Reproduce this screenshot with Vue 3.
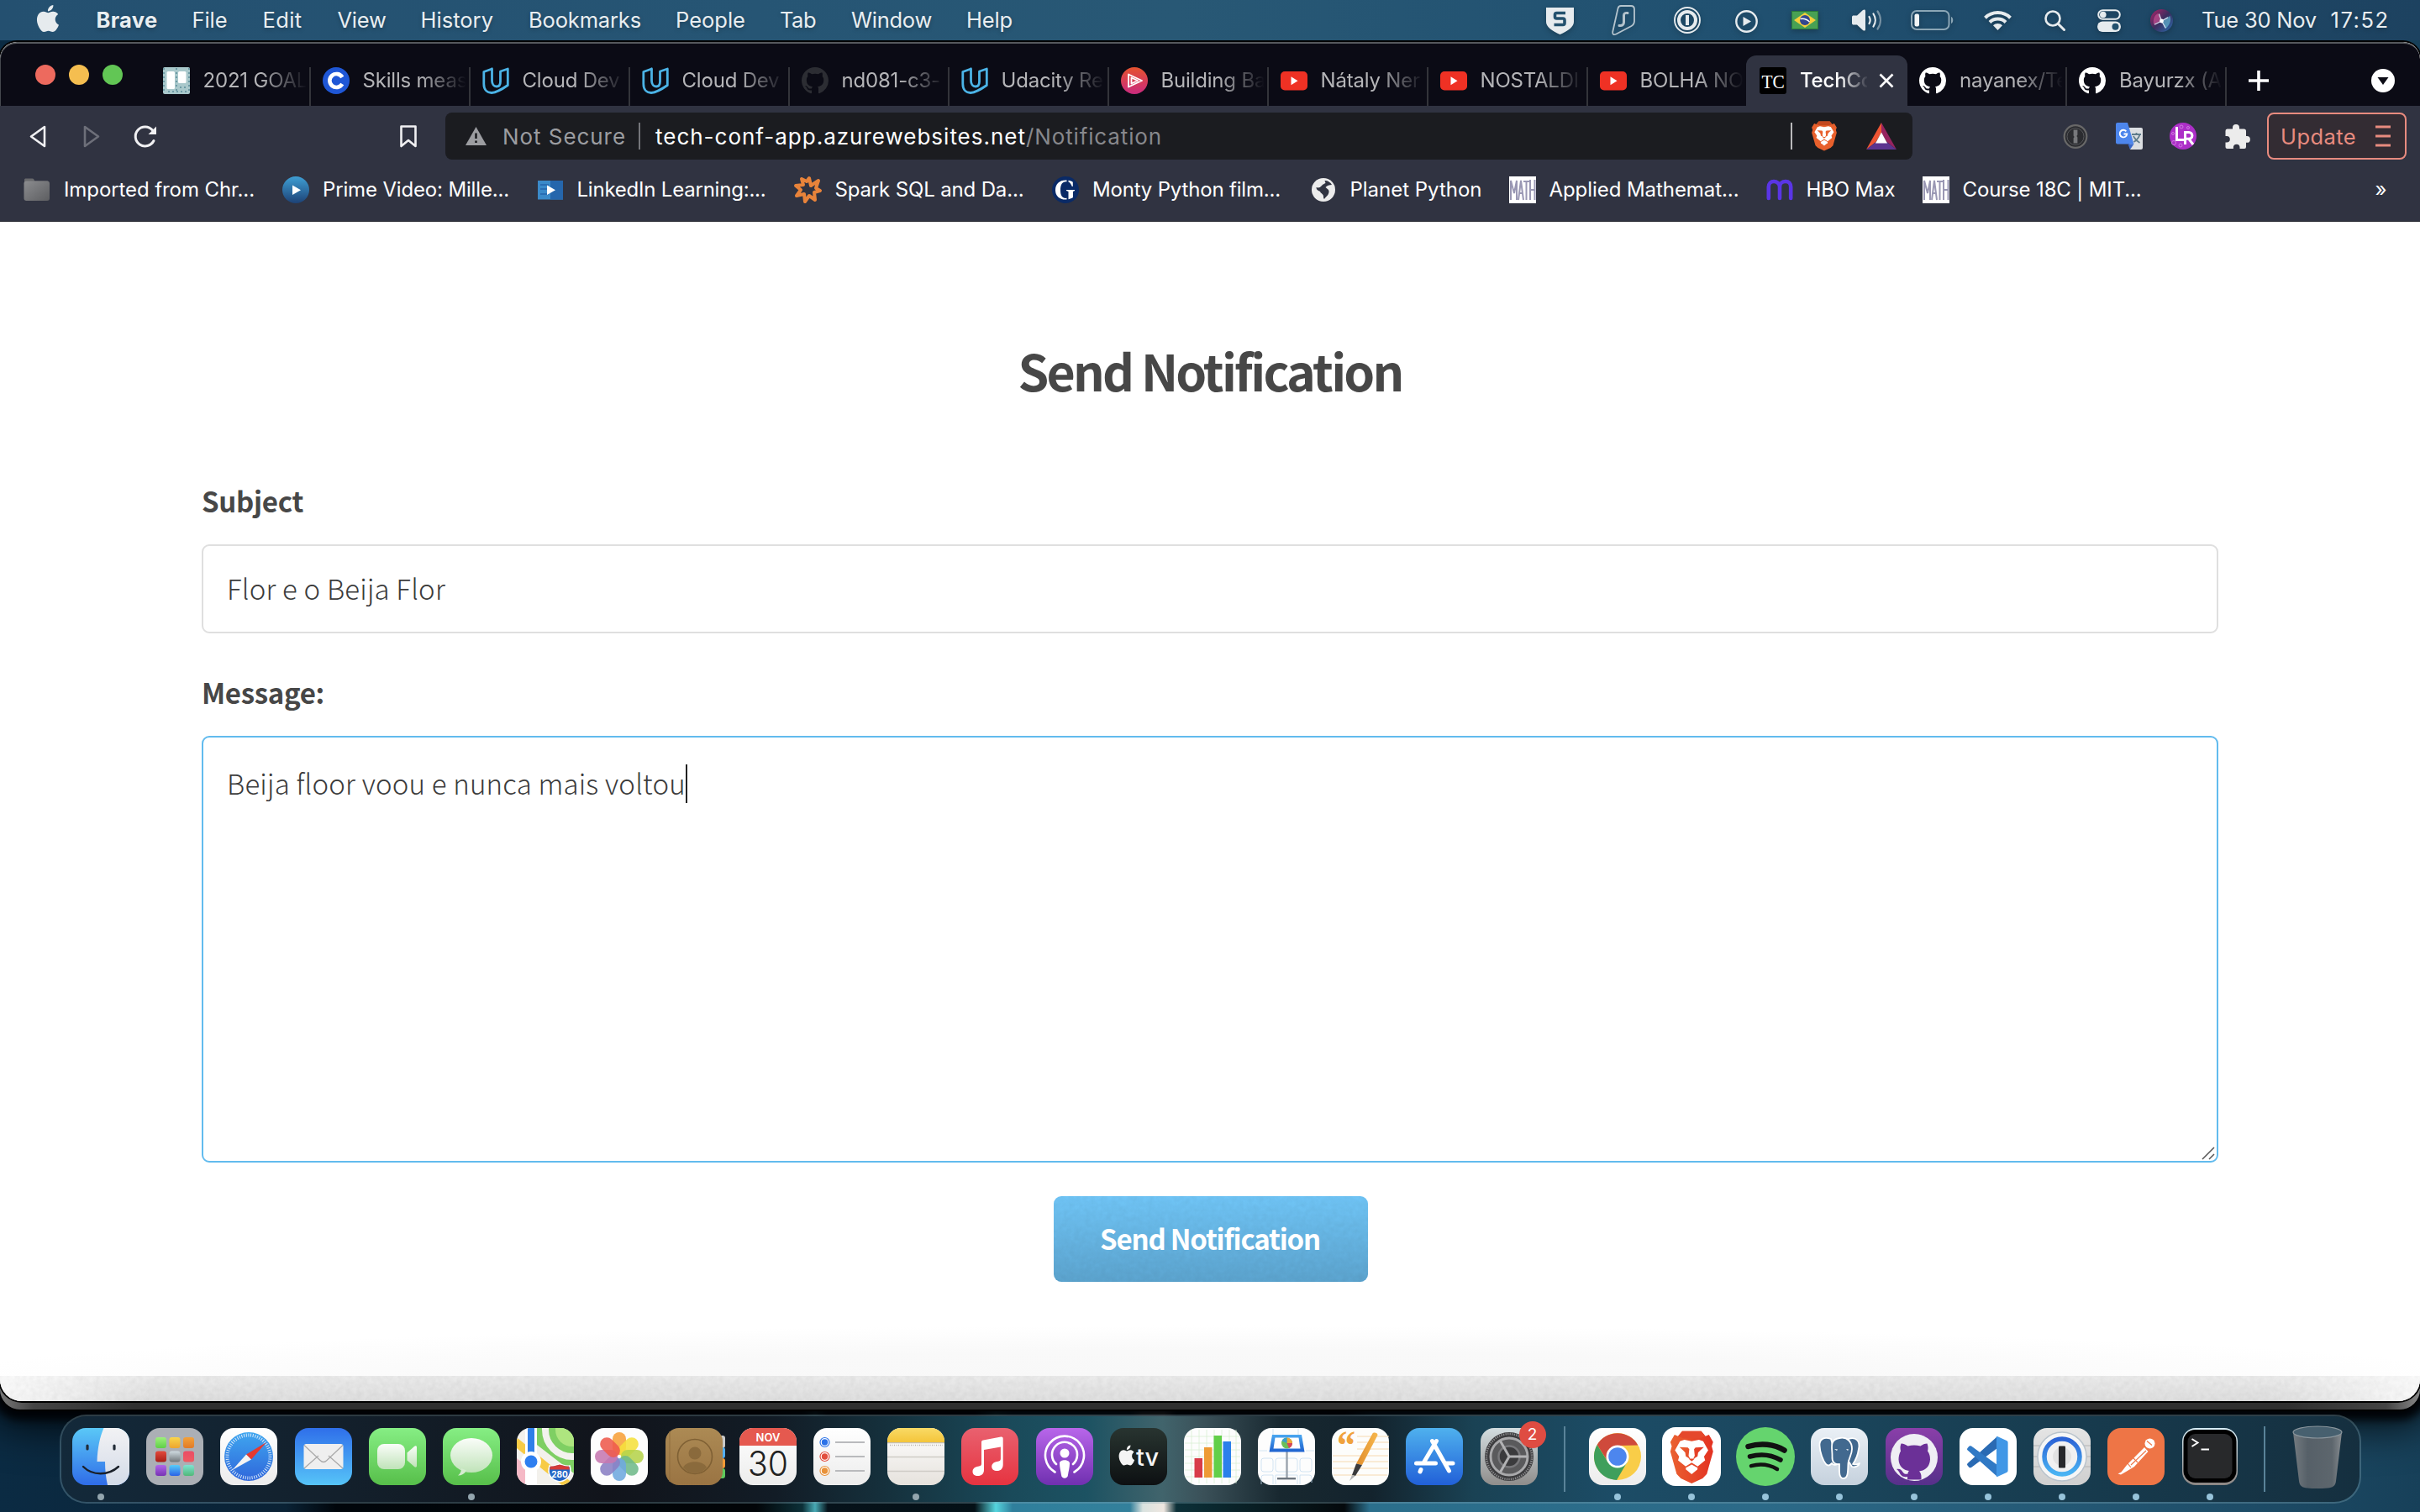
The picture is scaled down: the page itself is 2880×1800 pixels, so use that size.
<script setup>
// Stretches or tightens letter spacing so a label fills the given width.
const vFit = {
  mounted(el, { value }) {
    if (!value) return
    const natural = el.getBoundingClientRect().width
    el.style.letterSpacing = `${(value - natural) / el.textContent.length}px`
  },
}

const sans = `font-family="Inter, 'Liberation Sans', sans-serif"`

const octocat =
  'M8 0C3.58 0 0 3.58 0 8c0 3.54 2.29 6.53 5.47 7.59.4.07.55-.17.55-.38 0-.19-.01-.82-.01-1.49-2.01.37-2.53-.49-2.69-.94-.09-.23-.48-.94-.82-1.13-.28-.15-.68-.52-.01-.53.63-.01 1.08.58 1.23.82.72 1.21 1.87.87 2.33.66.07-.52.28-.87.51-1.07-1.78-.2-3.64-.89-3.64-3.95 0-.87.31-1.59.82-2.15-.08-.2-.36-1.02.08-2.12 0 0 .67-.21 2.2.82.64-.18 1.32-.27 2-.27.68 0 1.36.09 2 .27 1.53-1.04 2.2-.82 2.2-.82.44 1.1.16 1.92.08 2.12.51.56.82 1.27.82 2.15 0 3.07-1.87 3.75-3.65 3.95.29.25.54.73.54 1.48 0 1.07-.01 1.93-.01 2.2 0 .21.15.46.55.38A8.013 8.013 0 0016 8c0-4.42-3.58-8-8-8z'
const apple =
  'M12.152 6.896c-.948 0-2.415-1.078-3.96-1.04-2.04.027-3.91 1.183-4.961 3.014-2.117 3.675-.546 9.103 1.519 12.09 1.013 1.454 2.208 3.09 3.792 3.039 1.52-.065 2.09-.987 3.935-.987 1.831 0 2.35.987 3.96.948 1.637-.026 2.676-1.48 3.676-2.948 1.156-1.688 1.636-3.325 1.662-3.415-.039-.013-3.182-1.221-3.22-4.857-.026-3.04 2.48-4.494 2.597-4.559-1.429-2.09-3.623-2.324-4.39-2.376-2-.156-3.675 1.09-4.61 1.09zM15.53 3.83c.843-1.012 1.4-2.427 1.245-3.83-1.207.052-2.662.805-3.532 1.818-.78.896-1.454 2.338-1.273 3.714 1.338.104 2.715-.688 3.559-1.701'

const lion = (fill, crown) => `
  <path fill="${fill}" d="M9 .5h13.500l3 3.500 2.500-1 3 5-1 3 1 3.500-4.500 15.500-3 3L15.700 36.500 8 33l-3-3L.5 14.500l1-3.500-1-3 3-5L6 4z"/>
  <path fill="${crown}" d="M9 .5h13.500l3 3.500-4 1.500H10L6 4z"/>
  <path fill="#fff" d="M10.500 6.500l5.200 1 5.200-1 3 1 3.600 6.200-3 4.300.8 2.600-5.300 4.200-4.300-2.600-4.300 2.600L6 20.600l.8-2.600-3-4.300 3.600-6.200z"/>
  <path fill="#fff" d="M15.700 23.500l4.300 2.300-.3 1.200-4 3.200-4-3.200-.3-1.200z"/>
  <path fill="${fill}" d="M7 11.500l6 .3 1 1.200-.5 4.500 1.200 2.200-3.200-1.800-.4-2.600-1.600-1.600zM24.400 11.500l-6 .3-1 1.200.5 4.500-1.200 2.200 3.200-1.800.4-2.600 1.600-1.600zM13.500 19.500h4.400l-2.200 1.800z"/>`

const udacity = `<path fill="none" stroke="#4bb3e6" stroke-width="2.800" stroke-linejoin="round" stroke-linecap="round" d="M11.500 2L1.800 5.500V20C1.800 27 6 30.500 11 30.500c5.500 0 11-3.500 19.300-9V2L21.500 5v12c0 4-1.500 6-4.500 6s-5.500-2.500-5.500-7V2"/>`
const youtube = `<rect y="5" width="32" height="22.500" rx="5" fill="#ef3124"/><path fill="#fff" d="M12.500 11.200l8 5-8 5z"/>`
const math = `<rect width="32" height="32" fill="#fff"/><path fill="none" stroke="#9a98b4" stroke-width="2" d="M2 28V5l4 15 3-15v23M11 28l3-23 3 23M12 20h4M17 6h7M20.500 6v22M25 4v24M30.500 4v24M25 16h5"/>`

const favicons = {
  trello: `<rect width="32" height="32" rx="2" fill="#a9c8cb"/><path stroke="#6d9ba5" stroke-width="2" stroke-dasharray="2 3" d="M1 1v30M16 1v30M31 1v30M6 29h24M20 24h10"/><rect x="4.500" y="5" width="9.500" height="21" rx="1.500" fill="#fff"/><rect x="18" y="5" width="9.500" height="14" rx="1.500" fill="#fff"/>`,
  coursera: `<circle cx="16" cy="16" r="16" fill="#1f57d6"/><path fill="none" stroke="#fff" stroke-width="4.600" d="M23.300 12A8 8 0 1 0 23.300 20"/>`,
  udacity,
  githubDim: `<path transform="scale(2)" fill="#2c2d33" d="${octocat}"/>`,
  github: `<path transform="scale(2)" fill="#fff" d="${octocat}"/>`,
  acloud: `<circle cx="16" cy="16" r="16" fill="url(#g-acloud)"/><path fill="none" stroke="#fff" stroke-width="1.800" stroke-linejoin="round" d="M9 8.500l16 7.500-16 7.500zM12.500 12.500l7.500 3.500-7.500 3.500z"/>`,
  youtube,
  tc: `<rect width="32" height="32" rx="3" fill="#000"/><text x="16" y="24.500" fill="#fff" font-size="23" text-anchor="middle" textLength="27" lengthAdjust="spacingAndGlyphs" font-family="'Liberation Serif', serif">TC</text>`,
}

const bookmarkIcons = {
  folder: `<path fill="#68696c" d="M1 4c0-1 .8-1.500 1.500-1.500h8C12 2.500 13 4 13 5.500h16V10H1z"/><rect y="5.500" x=".5" width="30.500" height="23.500" rx="3" fill="url(#g-folder)"/>`,
  prime: `<circle cx="16" cy="16" r="16" fill="url(#g-prime)"/><path fill="#fff" d="M12 10.500l10 5.800-10 5.800z"/>`,
  linkedin: `<rect x="1" y="5" width="30" height="22.500" fill="#3a8ac9"/><path fill="#2566ac" d="M16 5h15v22.500H16z"/><path stroke="#2566ac" stroke-width="1.500" d="M4 10h10M4 15h8M4 21h10"/><path fill="#fff" d="M12 10.500l10 5.800-10 5.800z"/>`,
  spark: `<path fill="none" stroke="#e8833a" stroke-width="4" stroke-linejoin="round" d="M17 2l2 9 9-6-3 9 5 3-7 2 1 9-7-5-5 7-1-9-9 2 5-7-6-5 9-1-2-7 6 3z"/>`,
  guardian: `<circle cx="16" cy="16" r="16" fill="#0a2a66"/><path fill="#fff" d="M17.500 4.500C9 4 4 9 4 16.200S9 28 17.500 27.500v-1.700C12.500 26.500 10 23 10 16.200S12.500 5.800 17.500 6.300zM19.500 4.800c2 .3 4 1 5.300 1.900V12h-1c-1-2.500-2.400-4.700-4.300-5.500zM17 16h10v1l-2 1v7c-1.500 1-3.500 1.800-5.500 2.200V18L17 17z"/>`,
  globe: `<circle cx="16" cy="16" r="14" fill="#ececec"/><path fill="#303341" d="M7.500 13c2 1 4.500.5 6.500-2 1.500-2 3-2 4.500-3l-1-3c4 0 7 2 8.500 5-3 0-6 1-7.500 3l3 2.500c2 2 1 6-2 8.500-1 1-2 2-2.500 3-1.500-1-.5-3.500-1.500-5-1-1.800-3-2-3.500-4-2-1-4.500-2-4.500-5z"/>`,
  math,
  hbo: `<path fill="none" stroke="#5a35e6" stroke-width="4.600" stroke-linecap="round" d="M2.800 26V12.500C2.800 8.500 5.500 6 9 6s7 2.500 7 6.500V26M16 12.500C16 8.500 19 6 23 6s6.200 2.500 6.200 6.500V26"/>`,
}

const extensionIcons = {
  onepass: `<circle cx="16" cy="16.500" r="13.300" fill="#2b2c30" stroke="#686868" stroke-width="2.200"/><circle cx="16" cy="16.500" r="10" fill="none" stroke="#55565a" stroke-width="1"/><path fill="#77787b" d="M13.600 8.500h4.800v6l-1 1.500 1 1.500v7h-4.800v-6l1-1.500-1-1.500z"/>`,
  translate: `<path fill="#dcdfe2" d="M14 6h16a2 2 0 0 1 2 2v22a2 2 0 0 1-2 2H17z"/><path fill="none" stroke="#607d8b" stroke-width="1.800" d="M19 14h11M24.500 12v2M28.500 14c-1 4-4 7-7 9M21 16c1.500 3.500 4 6 7.500 8"/><path fill="#4d86ec" d="M2 0h12l7.500 25.500H2a2 2 0 0 1-2-2V2a2 2 0 0 1 2-2z"/><path fill="#3a69c9" d="M14.500 25.500h7L17 32z"/><path fill="none" stroke="#fff" stroke-width="1.900" d="M12.300 10.300a4.300 4.300 0 1 0 1 3.200H9.500"/>`,
  lr: `<circle cx="16" cy="16" r="16" fill="#ad2fc8"/><g fill="none" stroke="#cf7be0" stroke-width="1"><circle cx="14" cy="5" r="2"/><circle cx="22" cy="6" r="1.500"/><circle cx="5" cy="24" r="2.500"/><circle cx="13" cy="27" r="2"/><circle cx="4" cy="13" r="1.500"/></g><path fill="none" stroke="#fff" stroke-width="3" d="M8.500 5v15.500H18M18.500 26V11.500h4.500a3.800 3.800 0 0 1 0 7.800h-4M23 19.500l5 6.500"/>`,
  puzzle: `<path fill="#ececec" d="M4.500 7.500H11V6a4 4 0 0 1 8 0v1.500h5.500A2.500 2.500 0 0 1 27 10v6h1a3.900 3.900 0 0 1 0 7.800h-1V29a2 2 0 0 1-2 2h-5.500v-1.500a3.800 3.800 0 0 0-7.600 0V31H4.500a2 2 0 0 1-2-2v-5.500H4a3.800 3.800 0 0 0 0-7.600H2.500v-6a2.300 2.300 0 0 1 2-2.400z"/>`,
}

const menus = [
  { label: 'Brave', slot: 114, width: 73, bold: true },
  { label: 'File', slot: 84, width: 42 },
  { label: 'Edit', slot: 89, width: 47 },
  { label: 'View', slot: 99, width: 58 },
  { label: 'History', slot: 128.500, width: 86.500 },
  { label: 'Bookmarks', slot: 175, width: 134 },
  { label: 'People', slot: 124, width: 83 },
  { label: 'Tab', slot: 85, width: 43 },
  { label: 'Window', slot: 137, width: 96 },
  { label: 'Help', slot: 60, width: 55 },
]

const statusIcons = [
  { slot: 78, w: 33, h: 33, body: `<path fill="#e6ebee" d="M0 1h33v17c0 6-7 11-16.500 15C7 29 0 24 0 18z"/><path fill="none" stroke="#23516e" stroke-width="3.600" stroke-linejoin="round" d="M23 7.500H12.500a2 2 0 0 0-2 2V12a2 2 0 0 0 2 2H20a2 2 0 0 1 2 2v3.500a2 2 0 0 1-2 2H9.500"/>` },
  { slot: 74, w: 28, h: 36, body: `<g opacity=".75" fill="none" stroke="#e6ebee"><path stroke-width="1.800" d="M7.500 4C8 1.800 9 1 11 1h12c2.500 0 4 1.500 4 4v14c0 3-1 4.500-3.500 6L5.500 34.500c-3 1.500-4.700.5-4.300-2.500z"/><path stroke-width="3" stroke-linecap="round" d="M19 9.500c-3-.5-4.500.5-4.500 3v8c0 3-2 4.500-5.500 4"/></g>` },
  { slot: 73, w: 32, h: 32, body: `<circle cx="16" cy="16" r="15" fill="none" stroke="#e6ebee" stroke-width="1.900"/><circle cx="16" cy="16" r="10" fill="none" stroke="#e6ebee" stroke-width="4"/><path fill="#e6ebee" d="M14 10h4v12h-4z"/>` },
  { slot: 67, w: 27, h: 27, body: `<circle cx="13.500" cy="14.500" r="12.200" fill="none" stroke="#e6ebee" stroke-width="2.400"/><path fill="#e6ebee" d="M9.500 9l9.500 5.500L9.500 20z"/>` },
  { slot: 72, w: 32, h: 22, body: `<path fill="#2a7a3a" d="M0 0h32v22H0z"/><path fill="#48a154" d="M1 1h30v20H1z"/><path fill="#f6cf3c" d="M16 2l13 9-13 9L3 11z"/><circle cx="16" cy="11" r="6" fill="#33478f"/><path fill="none" stroke="#fff" stroke-width="1.400" d="M10.500 9.500c4-.8 8 .5 11 3.500"/>` },
  { slot: 70, w: 36, h: 26, body: `<path fill="#e6ebee" d="M0 9.500C0 8 .8 7.500 2 7.500h4L13 1c1.500-1 3-.8 3 1v22c0 1.800-1.500 2-3 1l-7-6.500H2c-1.200 0-2-.5-2-2z"/><g fill="none" stroke="#e6ebee" stroke-width="2.200" stroke-linecap="round"><path d="M20.500 9c1.500 2.500 1.500 5.500 0 8"/><path d="M25.500 5.500c3 4.500 3 10.500 0 15"/><path opacity=".45" d="M30.500 2.500c4.500 6.500 4.500 14.500 0 21"/></g>` },
  { slot: 87, w: 51, h: 24, body: `<rect x="1" y="1" width="44.500" height="22" rx="6" fill="none" stroke="#8ba6b6" stroke-width="2"/><rect x="4.500" y="4.500" width="5.500" height="15" rx="2" fill="#f1f4f5"/><path fill="#8ba6b6" d="M48 8c3 1 3 7 0 8z"/>` },
  { slot: 72, w: 33, h: 24, body: `<g fill="none" stroke="#e6ebee" stroke-width="4"><path d="M1.500 9.200a21.500 21.500 0 0 1 30 0"/><path d="M7 14.500a13.500 13.500 0 0 1 19 0"/></g><path fill="#e6ebee" d="M11 18.200c3.300-2.900 7.700-2.900 11 0L16.500 24z"/>` },
  { slot: 63, w: 25, h: 25, body: `<circle cx="10" cy="10" r="8.500" fill="none" stroke="#e6ebee" stroke-width="2.600"/><path stroke="#e6ebee" stroke-width="3" stroke-linecap="round" d="M16.500 16.500l7 7"/>` },
  { slot: 63, w: 28, h: 27, body: `<rect x="1.200" y="1.200" width="25.600" height="10.500" rx="5.200" fill="none" stroke="#e6ebee" stroke-width="2"/><circle cx="6.800" cy="6.500" r="3.800" fill="#e6ebee"/><rect y="14.500" width="28" height="12.500" rx="6.200" fill="#e6ebee"/><circle cx="21.500" cy="20.700" r="4" fill="#23516e"/>` },
  { slot: 61, w: 27, h: 27, body: `<circle cx="13.500" cy="13.500" r="13.500" fill="url(#g-siri)"/><path fill="#6fd3e8" opacity=".55" d="M13.500 14l10-6c2 6-1 11-5 15z"/><path fill="#e05aa0" opacity=".55" d="M13.500 14L4 18C3 12 5 7 9 5z"/><path fill="none" stroke="#e9f4ff" stroke-width="1.300" stroke-linecap="round" opacity=".9" d="M13.500 14l-3-8M13.500 14l7-4M13.500 14l-8 4M13.500 14l4.500 8"/><circle cx="13.500" cy="14" r="2.400" fill="#fff"/>` },
]

const tabs = [
  { icon: 'trello', title: '2021 GOAL' },
  { icon: 'coursera', title: 'Skills meas' },
  { icon: 'udacity', title: 'Cloud Dev' },
  { icon: 'udacity', title: 'Cloud Dev' },
  { icon: 'githubDim', title: 'nd081-c3-' },
  { icon: 'udacity', title: 'Udacity Re' },
  { icon: 'acloud', title: 'Building Ba' },
  { icon: 'youtube', title: 'Nátaly Ner' },
  { icon: 'youtube', title: 'NOSTALDI' },
  { icon: 'youtube', title: 'BOLHA NO' },
  { icon: 'tc', title: 'TechCo', active: true },
  { icon: 'github', title: 'nayanex/Te' },
  { icon: 'github', title: 'Bayurzx (A' },
]

const bookmarks = [
  { icon: 'folder', label: 'Imported from Chr...', slot: 308, width: 227 },
  { icon: 'prime', label: 'Prime Video: Mille...', slot: 302.500, width: 222 },
  { icon: 'linkedin', label: 'LinkedIn Learning:...', slot: 307, width: 225 },
  { icon: 'spark', label: 'Spark SQL and Da...', slot: 306.500, width: 225 },
  { icon: 'guardian', label: 'Monty Python film...', slot: 306.500, width: 224 },
  { icon: 'globe', label: 'Planet Python', slot: 237, width: 157 },
  { icon: 'math', label: 'Applied Mathemat...', slot: 306, width: 226 },
  { icon: 'hbo', label: 'HBO Max', slot: 186, width: 106 },
  { icon: 'math', label: 'Course 18C | MIT...', slot: 262, width: 213 },
]

const tile = (fill) => `<rect width="68" height="68" rx="16" fill="${fill}"/>`
const petals = ['#f7a13a', '#f5e03c', '#b5d34b', '#6fb98a', '#6ea8de', '#8a80c4', '#c678b0', '#ee5a4c']
  .map((c, i) => `<rect x="26" y="5" width="16" height="27" rx="8" fill="${c}" opacity=".88" transform="rotate(${i * 45} 34 34)"/>`)
  .join('')
const pads = ['g-lp1', 'g-lp2', 'g-lp3', 'g-lp4', 'g-lp5', 'g-lp6', 'g-lp7', 'g-lp8', 'g-lp9']
  .map((g, i) => `<rect x="${11 + (i % 3) * 16.500}" y="${11 + Math.floor(i / 3) * 16.500}" width="13" height="13" rx="3" fill="url(#${g})"/>`)
  .join('')

const apps = [
  { name: 'finder', running: true, body: `${tile('url(#g-finderL)')}<path fill="url(#g-finderR)" d="M37.500 0H52a16 16 0 0 1 16 16v36a16 16 0 0 1-16 16H42c-2-9-3-18-3-28h-9.500C30 24 33 10 37.500 0z"/><path stroke="#222c38" stroke-width="3.200" stroke-linecap="round" d="M18 21v4M50 21v4"/><path fill="none" stroke="#1a2029" stroke-width="2.400" stroke-linecap="round" d="M13 46c11 11 30 11 42 0"/>` },
  { name: 'launchpad', body: tile('#abafb5') + pads },
  { name: 'safari', body: `${tile('url(#g-white)')}<circle cx="34" cy="34" r="29" fill="url(#g-safari)"/><circle cx="34" cy="34" r="25.500" fill="none" stroke="#d6e8fa" stroke-width="4" stroke-dasharray="1 1.700"/><path fill="#e5392f" d="M55 17L31 31.500l6 6z"/><path fill="#f4f4f4" d="M14.500 50L31 31.500l6 6z"/>` },
  { name: 'mail', body: `${tile('url(#g-mail)')}<rect x="10.500" y="19" width="47" height="30" rx="3" fill="#efefef"/><path fill="none" stroke="#a9a9a9" stroke-width="1.200" d="M11 48l17-15M57 48L40 33M11 20.500l19 18c2.500 2.500 5.500 2.500 8 0l19-18"/>` },
  { name: 'facetime', body: `${tile('url(#g-green)')}<rect x="10" y="19" width="33" height="30" rx="8" fill="url(#g-glass)"/><path fill="url(#g-glass)" d="M45.500 29.500L54 22c1.500-1.200 3-.6 3 1v22c0 1.600-1.500 2.200-3 1l-8.500-7.500z"/>` },
  { name: 'messages', running: true, body: `${tile('url(#g-green)')}<ellipse cx="34" cy="32.500" rx="25" ry="20.500" fill="url(#g-glass)"/><path fill="#d5ecd0" d="M22 48c0 4-1.500 6.500-4 8.500 4.500 0 8-2 10-6z"/>` },
  { name: 'maps', body: `<g clip-path="url(#c-tile)"><path fill="#f3f1ec" d="M0 0h68v68H0z"/><path fill="#7fcf63" d="M24 0h44v54L24 20z"/><circle cx="66" cy="2" r="32" fill="none" stroke="#f3f2ee" stroke-width="8"/><circle cx="66" cy="2" r="20" fill="#aee57f"/><path stroke="#f7cb45" stroke-width="10" d="M-2 16l66 54"/><path fill="#f5b9c6" d="M0 36l10 8v24H0z"/><path stroke="#fff" stroke-width="14" d="M17 0v68"/><path stroke="#2f7fe8" stroke-width="8" d="M17 0v36"/><circle cx="17" cy="40" r="12" fill="#fff"/><circle cx="17" cy="40" r="7.500" fill="#2e7ff0"/></g><path fill="#2566c4" stroke="#fff" stroke-width="1.500" d="M39 45c4 1 8-1 12-2 4 1 8 3 12 2 3 9-1 17-12 19-11-2-15-10-12-19z"/><path fill="#d43b38" d="M40 45.500c4 .5 7-1 11-2 4 1 7 2.500 11 2l1 4H39z"/><text x="51" y="59" fill="#fff" font-size="10" font-weight="700" text-anchor="middle" ${sans}>280</text>` },
  { name: 'photos', body: tile('#fdfdfd') + petals },
  { name: 'contacts', body: `<rect x="60" y="9" width="11" height="15" rx="3" fill="#c9c9c9"/><rect x="60" y="23" width="11" height="13" rx="3" fill="#52aef0"/><rect x="60" y="36" width="11" height="12" rx="3" fill="#f19a37"/><rect x="60" y="48" width="11" height="12" rx="3" fill="#5fc95c"/>${tile('url(#g-contacts)')}<path stroke="#8f6d3c" stroke-width="1" d="M5 4v60"/><circle cx="35" cy="34" r="20.500" fill="none" stroke="#7f6034" stroke-width="1.600"/><circle cx="35" cy="30" r="7.500" fill="#8a6a3c"/><path fill="#8a6a3c" d="M21 47c4-9 24-9 28 0-7 9-21 9-28 0z"/>` },
  { name: 'calendar', body: `${tile('url(#g-white)')}<path fill="#e5594f" d="M0 21v-5A16 16 0 0 1 16 0h36a16 16 0 0 1 16 16v5z"/><text x="34" y="16" fill="#fff" font-size="13" font-weight="600" text-anchor="middle" ${sans}>NOV</text><text x="34" y="57" fill="#222" font-size="41" font-weight="300" text-anchor="middle" textLength="48" lengthAdjust="spacingAndGlyphs" ${sans}>30</text>` },
  { name: 'reminders', body: `${tile('url(#g-white)')}<path stroke="#b9babd" stroke-width="2" d="M26 17h35M26 34h35M26 51h35"/><g stroke-width="1.200" fill="#fff"><circle cx="13.500" cy="17" r="5.500" stroke="#2b72e8"/><circle cx="13.500" cy="34" r="5.500" stroke="#e24d3d"/><circle cx="13.500" cy="51" r="5.500" stroke="#e8923a"/></g><circle cx="13.500" cy="17" r="3.700" fill="#2b72e8"/><circle cx="13.500" cy="34" r="3.700" fill="#e24d3d"/><circle cx="13.500" cy="51" r="3.700" fill="#e8923a"/>` },
  { name: 'notes', running: true, body: `${tile('url(#g-notes)')}<path fill="url(#g-yellow)" d="M0 17v-1A16 16 0 0 1 16 0h36a16 16 0 0 1 16 16v1z"/><path stroke="#b5b1a6" d="M0 17.700h68"/><path stroke="#b8b4ac" stroke-width="1.500" stroke-dasharray="1 1.500" d="M3 20.500h63"/><path stroke="#cfccc6" stroke-width="1.500" d="M0 34.500h68M0 51.500h68"/>` },
  { name: 'music', body: `${tile('url(#g-music)')}<path fill="#fff" d="M24 17c0-1.500.8-2.300 2.200-2.600l21-3.800c1.500-.3 2.500.4 2.500 2v31c0 5-3 7.500-7 7.500s-6.500-2-6.500-5c0-3.500 2.500-5.500 6.500-6.200 3-.6 4.200-1.200 4.200-3.500V22.500L27 26v24c0 4.500-3 7-7.200 7-4 0-6.300-2-6.300-5 0-3.500 2.500-5.500 6.500-6.200 3-.5 4-1.200 4-3.300z"/>` },
  { name: 'podcasts', body: `${tile('url(#g-podcast)')}<g fill="none" stroke="#fff" stroke-width="2.600" stroke-linecap="round"><path d="M22.500 52.500a23 23 0 1 1 23 0"/><path d="M24 43a15 15 0 1 1 20 0"/></g><circle cx="34" cy="30" r="5.500" fill="#fff"/><path fill="#fff" d="M28 42c0-5 12-5 12 0 0 5-1.500 10-2 14-.5 5-7.500 5-8 0-.5-4-2-9-2-14z"/>` },
  { name: 'tv', body: `${tile('url(#g-tv)')}<path transform="translate(8.500 20.500) scale(.95 1)" fill="#f5f5f5" d="${apple}"/><text x="31" y="44.500" fill="#f5f5f5" font-size="28" font-weight="500" textLength="27" lengthAdjust="spacingAndGlyphs" ${sans}>tv</text>` },
  { name: 'numbers', body: `${tile('#fdfdfd')}<path stroke="#d8efd3" stroke-width=".8" d="M9 2v64M18 2v64M27 2v64M36 2v64M45 2v64M54 2v64M62 2v64M1 10h66M1 18h66M1 26h66M1 34h66M1 42h66M1 50h66M1 58h66"/><path fill="#d83c49" d="M12.500 36h9.500v23h-9.500z"/><path fill="#ee9a35" d="M24 23h9.500v36H24z"/><path fill="#62cf49" d="M35.500 9H45v50h-9.500z"/><path fill="#2b80ea" d="M46.500 16H56v43h-9.500z"/>` },
  { name: 'keynote', body: `${tile('#fdfdfd')}<g fill="none" stroke="#c7ddf0" stroke-width=".8"><rect x="4" y="36" width="14" height="16" rx="3"/><rect x="21" y="36" width="26" height="16" rx="3"/><rect x="50" y="36" width="14" height="16" rx="3"/><path d="M18 1v8M48 1v8M1 27h10M57 27h10M4 67v-8q0-3 3-3h11v11M21 67V56h26v11M50 67V56h11q3 0 3 3v6"/></g><path stroke="#9aa3ad" stroke-width="2.400" d="M34.500 28v32"/><rect x="23" y="59" width="22" height="2.400" fill="#6f7780"/><path fill="url(#g-key)" d="M17 8h35l3.500 20.500h-42z"/><path fill="#fff" d="M20.500 11.500h28l2 13h-32z"/><circle cx="34.500" cy="18" r="6.500" fill="#6bbf59"/><path fill="#f0a73a" d="M34.500 18v-6.500a6.500 6.500 0 0 1 6.500 6.500z"/><path fill="#d8475a" d="M34.500 18H41a6.500 6.500 0 0 1-4 6z"/><path fill="#3aa0c9" d="M34.500 18v-6.500a6.500 6.500 0 0 0-6 4z"/>` },
  { name: 'pages', body: `${tile('#fdfdfb')}<path stroke="#f6d9b0" stroke-width="1" d="M30 10h38M30 17h38M30 25h38M1 33h66M1 40h66M1 48h66M2 56h64"/><text x="6" y="37" fill="#f0a23c" font-size="48" font-weight="700" textLength="22" lengthAdjust="spacingAndGlyphs" font-family="'Liberation Serif', serif">“</text><path fill="url(#g-pen)" d="M48.500 6.500c1-2 6.500-1 6 2L36 44l-7-1.500z"/><path fill="#3a3a3c" d="M29 42.500l7 1.500-8 13-4-1z"/><path fill="#b5b5b5" d="M24 56l4 1-7 6z"/>` },
  { name: 'appstore', body: `${tile('url(#g-appstore)')}<g stroke="#fff" stroke-width="5" stroke-linecap="round"><path d="M36.500 15.500L22 40M31.500 15.500L51.500 51M12.500 42h23M47 42h9M18 49.500l-1 2.500"/></g>` },
  { name: 'preferences', badge: '2', body: `${tile('url(#g-prefs)')}<circle cx="34" cy="34" r="29" fill="#3b3b3d"/><circle cx="34" cy="34" r="27" fill="none" stroke="#8c8c8e" stroke-width="2.500" stroke-dasharray="1.300 1.300"/><circle cx="34" cy="34" r="22" fill="#5a5a5c" stroke="#a9a9ab" stroke-width="3"/><circle cx="34" cy="34" r="12.500" fill="#3b3b3d" stroke="#77777a" stroke-width="2.500"/><path stroke="#b2b2b4" stroke-width="3" d="M34 34h21M34 34L23.500 15.500M34 34L23.500 52.500"/>` },
]

const recentApps = [
  { name: 'chrome', body: `${tile('url(#g-white)')}<circle cx="34" cy="34" r="28" fill="#f9cd48"/><path fill="#cf4a3c" d="M9.700 20A28 28 0 0 1 58.300 20.500L34 21 22.500 40z"/><path fill="#3f9f5c" d="M9.700 20A28 28 0 0 0 33 62L45.500 40.500 22.500 40.500z"/><circle cx="34" cy="34" r="13.500" fill="#fff"/><circle cx="34" cy="34" r="10.800" fill="#4d86ee"/>` },
  { name: 'brave', body: `<rect x="-1" y="-1" width="70" height="70" rx="16" fill="#fff"/><g transform="translate(8 2.800) scale(1.670 1.730)">${lion('url(#g-lion)', '#e5482c')}</g>` },
  { name: 'spotify', body: `<circle cx="34" cy="34" r="35" fill="#65d46e"/><g fill="none" stroke="#111" stroke-linecap="round"><path stroke-width="6.500" d="M13.500 22c15-4.500 31-3 43 4.500"/><path stroke-width="5.500" d="M15.500 34c13-3.800 26-2 36.500 4"/><path stroke-width="4.500" d="M17 45.200c11-3 21.500-1.800 31 3.800"/></g>` },
  { name: 'postgres', body: `${tile('url(#g-pg)')}<g fill="#42698f" stroke="#fff" stroke-width="1.800" stroke-linejoin="round"><path d="M45 13c9-3 14 3 12 12-1 7-4 14-7 18 3 1 6 0 8-1-1 4-6 5-9 4l-9-14z"/><path d="M24 13c-8-3-14 0-13.500 8 .3 8 4 18 7.500 22 3 3 5 1 7-1 2 3 6 2 7 0z"/><path d="M34 12c10-2 15 5 15 13 0 7-4 11-4.500 17-.5 7 .5 18-5.500 18s-5-9-5-17c-6 1-9-3-8.500-9C26 25 21 14 34 12z"/></g><path fill="#fff" d="M28 25l4 .5-1 1.500zM42 25l3 .5-1 1.500z"/>` },
  { name: 'github-desktop', body: `${tile('url(#g-gh)')}<circle cx="34" cy="35" r="28" fill="#efeef4"/><path fill="#6b3097" d="M18.500 18.500c3 0 6 1.500 8 3 5-1.200 10-1.200 15 0 2-1.500 5-3 8-3 1.500 4 1 7 .5 9 3 4 3 8 3 10-.5 9-6 13-13 14 2 2 2.500 4 2.500 7v3H26V58c-6 1-8-2-9.500-5-1-2-2-3-3.500-4 4-1 6 1 7.500 3.500 1.500 2.500 3.500 2.500 6 2 0-1.500.5-2.500 1.500-3.500-7-1-12-5-12.500-13.500 0-3.500.8-7 2.500-10-.5-2-1-5 .5-9z"/>` },
  { name: 'vscode', body: `${tile('#fff')}<path fill="#2a6ab3" d="M45 10v14L14 47c-1 .6-2 .4-2.700-.3L9.500 44.500c-.7-.8-.6-1.800.2-2.600z"/><path fill="#3079c5" d="M45 58V44L14 21.500c-1-.6-2-.4-2.700.3L9.500 24c-.7.8-.6 1.800.2 2.600z"/><path fill="#4197e6" d="M45 10l11 5c1.200.6 1.600 1.300 1.600 2.500v33c0 1.200-.4 1.900-1.600 2.500l-11 5c-1.300.4-1-.5-1-1.500V11.500c0-1-.3-1.900 1-1.500z"/>` },
  { name: 'onepassword', body: `${tile('url(#g-1p)')}<path stroke="#b4b4b4" stroke-width="1" d="M0 21h68M0 34h68M0 46h68"/><circle cx="34" cy="34" r="29" fill="#f6f6f6" stroke="#b9c3cc" stroke-width="1.500"/><circle cx="34" cy="34" r="21" fill="#f1f1f1" stroke="url(#g-1pring)" stroke-width="5.500"/><circle cx="34" cy="34" r="11" fill="#e2e2e2"/><rect x="30" y="21.500" width="8" height="26" rx="1" fill="#27282b"/>` },
  { name: 'postman', body: `${tile('#ee7546')}<circle cx="50.500" cy="18.500" r="6" fill="#fff"/><path fill="#fff" d="M44 23l4.500 5L32 46l-9 5.500-7 4-3.500-1 4-2 7-9z"/><path stroke="#ee7546" stroke-width="1.200" d="M46 27L28 44M30 35l6 6M47 15.500l6 5M24 42l4 5"/>` },
  { name: 'terminal', body: `<rect x="1" y="0" width="66" height="68" rx="16" fill="url(#g-term)"/><rect x="2.500" y="2" width="63" height="63" rx="14" fill="#000"/><rect x="7.500" y="7" width="53" height="53" rx="9" fill="#28292b"/><path fill="none" stroke="#fff" stroke-width="2" d="M12.500 13l7 4.500-7 4.500M23.500 25.500h9.500"/>` },
]
const trash = `<path fill="url(#g-trash)" d="M1 8l7 58c.6 6 4 8 10 8.500 7 .8 15 .8 24 0 6-.5 9.500-2.500 10-8.500L59 8z"/><ellipse cx="30" cy="8" rx="29" ry="7" fill="#47606f" stroke="#8b969d" stroke-width="1.200"/>`
</script>

<template>
  <div class="desktop">
    <svg class="defs" width="0" height="0" aria-hidden="true">
      <defs>
        <clipPath id="c-tile"><rect width="68" height="68" rx="16" /></clipPath>
        <linearGradient id="g-acloud" x2="0" y2="1"><stop stop-color="#e5532f" /><stop offset="1" stop-color="#c92a7e" /></linearGradient>
        <linearGradient id="g-folder" x2="1" y2="1"><stop stop-color="#8b8c8f" /><stop offset="1" stop-color="#5d5e61" /></linearGradient>
        <linearGradient id="g-prime" x2="0" y2="1"><stop stop-color="#3f9fd4" /><stop offset="1" stop-color="#1d4276" /></linearGradient>
        <linearGradient id="g-siri" x2="1" y2="1"><stop stop-color="#b0256a" /><stop offset=".5" stop-color="#3b2d5e" /><stop offset="1" stop-color="#2a6fb0" /></linearGradient>
        <linearGradient id="g-finderL" x2="0" y2="1"><stop stop-color="#5ac8f7" /><stop offset="1" stop-color="#2f6ce8" /></linearGradient>
        <linearGradient id="g-finderR" x2="0" y2="1"><stop stop-color="#f2f2f4" /><stop offset="1" stop-color="#d3dbe8" /></linearGradient>
        <linearGradient id="g-white" x2="0" y2="1"><stop stop-color="#ffffff" /><stop offset="1" stop-color="#ececec" /></linearGradient>
        <linearGradient id="g-safari" x2="0" y2="1"><stop stop-color="#3fa6ef" /><stop offset="1" stop-color="#2f66db" /></linearGradient>
        <linearGradient id="g-mail" x2="0" y2="1"><stop stop-color="#2f6fea" /><stop offset="1" stop-color="#56c4f8" /></linearGradient>
        <linearGradient id="g-green" x2="0" y2="1"><stop stop-color="#86ee84" /><stop offset="1" stop-color="#57bf4a" /></linearGradient>
        <linearGradient id="g-glass" x2="0" y2="1"><stop stop-color="#fafdf9" /><stop offset="1" stop-color="#c0e3b9" /></linearGradient>
        <linearGradient id="g-contacts" x2="0" y2="1"><stop stop-color="#ac8a54" /><stop offset="1" stop-color="#9a7443" /></linearGradient>
        <linearGradient id="g-notes" x2="0" y2="1"><stop stop-color="#ffffff" /><stop offset="1" stop-color="#e6e2dd" /></linearGradient>
        <linearGradient id="g-yellow" x2="0" y2="1"><stop stop-color="#f9da66" /><stop offset="1" stop-color="#f4c53a" /></linearGradient>
        <linearGradient id="g-music" x2="0" y2="1"><stop stop-color="#e9616f" /><stop offset="1" stop-color="#e63340" /></linearGradient>
        <linearGradient id="g-podcast" x2="0" y2="1"><stop stop-color="#b866ea" /><stop offset="1" stop-color="#7030b0" /></linearGradient>
        <linearGradient id="g-tv" x2="0" y2="1"><stop stop-color="#283430" /><stop offset="1" stop-color="#0d1012" /></linearGradient>
        <linearGradient id="g-key" x2="0" y2="1"><stop stop-color="#4aa7f0" /><stop offset="1" stop-color="#1f62cf" /></linearGradient>
        <linearGradient id="g-pen" x2="1" y2="0"><stop stop-color="#e08c2c" /><stop offset="1" stop-color="#f7b84d" /></linearGradient>
        <linearGradient id="g-appstore" x2="0" y2="1"><stop stop-color="#4fb1ee" /><stop offset="1" stop-color="#2160d8" /></linearGradient>
        <linearGradient id="g-prefs" x2="0" y2="1"><stop stop-color="#d3dde0" /><stop offset="1" stop-color="#8f8d8b" /></linearGradient>
        <linearGradient id="g-lion" x2="1" y2="0"><stop stop-color="#ea6130" /><stop offset="1" stop-color="#e33222" /></linearGradient>
        <linearGradient id="g-pg" x2="0" y2="1"><stop stop-color="#eaf0f6" /><stop offset="1" stop-color="#c5d1dd" /></linearGradient>
        <linearGradient id="g-gh" x2="0" y2="1"><stop stop-color="#8a3fa9" /><stop offset="1" stop-color="#56308a" /></linearGradient>
        <linearGradient id="g-1p" x2="0" y2="1"><stop stop-color="#e4e4e4" /><stop offset="1" stop-color="#cfcfcf" /></linearGradient>
        <linearGradient id="g-1pring" x2="0" y2="1"><stop stop-color="#2b63d6" /><stop offset="1" stop-color="#4ab4f3" /></linearGradient>
        <linearGradient id="g-term" x2="0" y2="1"><stop stop-color="#d9eef7" /><stop offset="1" stop-color="#8c8683" /></linearGradient>
        <linearGradient id="g-trash" x2="1" y2="0"><stop stop-color="#747b80" /><stop offset=".3" stop-color="#566068" /><stop offset=".8" stop-color="#5d666d" /><stop offset="1" stop-color="#868b8f" /></linearGradient>
        <linearGradient id="g-lp1" x2="0" y2="1"><stop stop-color="#9df07c" /><stop offset="1" stop-color="#5fcf48" /></linearGradient>
        <linearGradient id="g-lp2" x2="0" y2="1"><stop stop-color="#f9d64a" /><stop offset="1" stop-color="#eda52f" /></linearGradient>
        <linearGradient id="g-lp3" x2="0" y2="1"><stop stop-color="#f2a13a" /><stop offset="1" stop-color="#e17a28" /></linearGradient>
        <linearGradient id="g-lp4" x2="0" y2="1"><stop stop-color="#e34a3c" /><stop offset="1" stop-color="#a81f17" /></linearGradient>
        <linearGradient id="g-lp5" x2="0" y2="1"><stop stop-color="#cfdbe0" /><stop offset="1" stop-color="#70767a" /></linearGradient>
        <linearGradient id="g-lp6" x2="0" y2="1"><stop stop-color="#ea4c66" /><stop offset="1" stop-color="#ee5b62" /></linearGradient>
        <linearGradient id="g-lp7" x2="0" y2="1"><stop stop-color="#b066ea" /><stop offset="1" stop-color="#7733b3" /></linearGradient>
        <linearGradient id="g-lp8" x2="0" y2="1"><stop stop-color="#58cdf9" /><stop offset="1" stop-color="#2b62e6" /></linearGradient>
        <linearGradient id="g-lp9" x2="0" y2="1"><stop stop-color="#7fe3d3" /><stop offset="1" stop-color="#52b878" /></linearGradient>
        <filter id="grain" x="0" y="0" width="100%" height="100%">
          <feTurbulence type="fractalNoise" baseFrequency=".16" numOctaves="2" seed="4" />
          <feColorMatrix values="0 0 0 0 0  0 0 0 0 0  0 0 0 0 0  .5 .5 0 0 -.3" />
        </filter>
      </defs>
    </svg>

    <header class="menubar">
      <div class="apple">
        <svg width="32" height="32" viewBox="0 0 24 24"><path fill="#e6ebee" :d="apple" /></svg>
      </div>
      <nav class="menus">
        <div v-for="m in menus" :key="m.label" class="menu" :style="{ width: m.slot + 'px' }">
          <span v-fit="m.width" :class="{ bold: m.bold }">{{ m.label }}</span>
        </div>
      </nav>
      <div class="status">
        <div v-for="(s, i) in statusIcons" :key="i" class="status-slot" :style="{ width: s.slot + 'px' }">
          <svg :width="s.w" :height="s.h" :viewBox="`0 0 ${s.w} ${s.h}`" v-html="s.body"></svg>
        </div>
        <div class="date"><span v-fit="137">Tue 30 Nov</span></div>
        <div><span v-fit="70">17:52</span></div>
      </div>
    </header>

    <div class="window-behind"></div>

    <main class="window">
      <div class="tabstrip">
        <div class="lights"><i class="red"></i><i class="yellow"></i><i class="green"></i></div>
        <div v-for="(t, i) in tabs" :key="i" class="tab" :class="{ active: t.active, 'before-active': tabs[i + 1]?.active }">
          <svg class="favicon" width="32" height="32" viewBox="0 0 32 32" v-html="favicons[t.icon]"></svg>
          <span class="tab-title">{{ t.title }}</span>
          <svg v-if="t.active" class="close" width="18" height="18" viewBox="0 0 18 18"><path stroke="#fff" stroke-width="2.600" d="M1.500 1.500l15 15M16.500 1.500l-15 15" /></svg>
        </div>
        <svg class="plus" width="24" height="24" viewBox="0 0 24 24"><path stroke="#fff" stroke-width="3.600" d="M12 0v24M0 12h24" /></svg>
        <svg class="tab-search" width="28" height="28" viewBox="0 0 28 28"><circle cx="14" cy="14" r="14" fill="#fff" /><path fill="#0c0c16" d="M7.500 10h13L14 19z" /></svg>
      </div>

      <div class="toolbar">
        <svg class="back" width="20" height="27" viewBox="0 0 20 27"><path fill="none" stroke="#f0f0f2" stroke-width="2.600" stroke-linejoin="round" d="M18 2v23L2 13.500z" /></svg>
        <svg class="forward" width="20" height="27" viewBox="0 0 20 27"><path fill="none" stroke="#6d6f79" stroke-width="2.600" stroke-linejoin="round" d="M2 2v23l16-11.500z" /></svg>
        <svg class="reload" width="28" height="27" viewBox="0 0 28 27"><path fill="none" stroke="#f0f0f2" stroke-width="3" stroke-linecap="round" d="M24 18.500A11.500 11.500 0 1 1 22.500 6" /><path fill="#f0f0f2" d="M27 1.500v9.500H17.500z" /></svg>
        <svg class="save" width="20" height="27" viewBox="0 0 20 27"><path fill="none" stroke="#f0f0f2" stroke-width="2.600" stroke-linejoin="round" d="M1.500 1.500h17v23.500L10 18 1.500 25z" /></svg>
        <div class="urlbar">
          <svg class="warn" width="25" height="22" viewBox="0 0 25 22"><path fill="#9c9da1" d="M12.500 0L25 22H0z" /><path stroke="#1b1c20" stroke-width="2.600" d="M12.500 7.500v6.500M12.500 16.500v2.600" /></svg>
          <span v-fit="147" class="insecure">Not Secure</span>
          <i class="url-sep"></i>
          <div class="url"><span v-fit="441">tech-conf-app.azurewebsites.net</span><span v-fit="162" class="path">/Notification</span></div>
          <i class="url-sep light"></i>
          <svg class="shield" width="32" height="36" viewBox="0 0 31.500 37" v-html="lion('#e8602c', '#c4491f')"></svg>
          <svg class="bat" width="36" height="32" viewBox="0 0 36 32"><path fill="#ee5533" d="M18 0L0 32l11.500-9L18 12z" /><path fill="#96245f" d="M18 0l18 32-11.500-9L18 12z" /><path fill="#5c358f" d="M0 32h36l-11.500-9h-13z" /><path fill="#fff" d="M18 11.500L25 24.500H11z" /></svg>
        </div>
        <div class="extensions">
          <svg v-for="(body, name) in extensionIcons" :key="name" width="32" height="32" viewBox="0 0 32 32" v-html="body"></svg>
        </div>
        <button class="update">
          <span v-fit="90">Update</span>
          <svg width="18" height="26" viewBox="0 0 18 26"><path stroke="#e88b7f" stroke-width="3" d="M0 2h18M0 13h18M0 24h18" /></svg>
        </button>
      </div>

      <div class="bookmarks">
        <div v-for="(b, i) in bookmarks" :key="i" class="bookmark" :style="{ width: b.slot + 'px' }">
          <svg width="32" height="32" viewBox="0 0 32 32" v-html="bookmarkIcons[b.icon]"></svg>
          <span v-fit="b.width">{{ b.label }}</span>
        </div>
        <span class="more">»</span>
      </div>

      <section class="page">
        <h1><span v-fit="457">Send Notification</span></h1>
        <label><span v-fit="121">Subject</span></label>
        <div class="input"><span v-fit="260">Flor e o Beija Flor</span></div>
        <label class="second"><span v-fit="146">Message:</span></label>
        <div class="textarea">
          <span v-fit="546">Beija floor voou e nunca mais voltou</span><i class="caret"></i>
          <svg class="grip" width="16" height="16" viewBox="0 0 16 16"><path stroke="#555" stroke-width="1.500" d="M1 15L15 1M9 15l6-6" /></svg>
        </div>
        <button class="send">
          <svg class="grain" width="374" height="102"><rect width="374" height="102" filter="url(#grain)" /></svg>
          <span v-fit="262">Send Notification</span>
        </button>
      </section>
      <footer class="site-footer">
        <svg class="grain" width="2880" height="32"><rect width="2880" height="32" filter="url(#grain)" /></svg>
      </footer>
    </main>

    <div class="dock">
      <div v-for="a in apps" :key="a.name" class="app">
        <svg width="68" height="68" viewBox="0 0 68 68" v-html="a.body"></svg>
        <span v-if="a.badge" class="badge">{{ a.badge }}</span>
        <i v-if="a.running" class="dot"></i>
      </div>
      <i class="dock-sep"></i>
      <div v-for="a in recentApps" :key="a.name" class="app bright">
        <svg width="68" height="68" viewBox="0 0 68 68" v-html="a.body"></svg>
        <i class="dot"></i>
      </div>
      <i class="dock-sep second"></i>
      <svg class="trash" width="60" height="76" viewBox="0 0 60 76" v-html="trash"></svg>
    </div>
  </div>
</template>

<style>
body {
  margin: 0;
  background: #000;
}
</style>

<style scoped>
.desktop {
  position: relative;
  width: 2880px;
  height: 1800px;
  overflow: hidden;
  display: flex;
  flex-direction: column;
  font-family: Inter, 'Liberation Sans', sans-serif;
  background: linear-gradient(90deg, #0b2b43 0, #0a2235 340px, #01060b 400px, #020508 900px, #0c3038 955px, #47a9b4 970px, #06121a 985px, #041016 1160px, #55d5de 1185px, #2f7f9c 1205px, #33809b 1345px, #d9e2df 1360px, #efe7e0 1385px, #0c3038 1400px, #04090c 1600px, #2b6f8c 1630px, #2c6a88 2100px, #235672 2500px, #174059 2880px);
}
.defs {
  position: absolute;
}
svg {
  flex: none;
  display: block;
  overflow: visible;
}

.menubar {
  flex: none;
  height: 48px;
  display: flex;
  align-items: center;
  background: linear-gradient(90deg, #245070 0, #265574 900px, #285875 1400px, #205070 2100px, #1d4260 2880px);
  color: #e9eef1;
  font-size: 25.500px;
  line-height: 48px;
  text-shadow: 0 2px 5px rgba(0, 0, 0, 0.25);
  white-space: nowrap;
}
.apple {
  width: 114.500px;
  height: 48px;
  padding: 6px 0 0 41px;
  box-sizing: border-box;
}
.menus {
  display: flex;
  flex: 1;
}
.menu .bold {
  font-weight: 700;
}
.status {
  display: flex;
  align-items: center;
  width: 1040px;
}
.date {
  width: 153.500px;
}
.status-slot svg {
  filter: drop-shadow(0 2px 3px rgba(0, 0, 0, 0.25));
}

.window-behind {
  position: absolute;
  left: 0;
  right: 0;
  top: 1600px;
  height: 78px;
  border-radius: 0 0 24px 24px;
  background: linear-gradient(90deg, #777 0, #444 40px, #2f2f2f 160px, #2f2f2f 2720px, #444 2840px, #888 2880px);
  box-shadow: 0 2px 0 #000, 0 2px 10px 10px rgba(0, 2, 5, 0.92), 0 8px 50px 12px rgba(0, 0, 0, 0.8);
}
.window {
  position: relative;
  flex: none;
  margin-top: 2px;
  height: 1618px;
  display: flex;
  flex-direction: column;
  overflow: hidden;
  border-radius: 20px 20px 26px 26px;
  background: #fff;
  box-shadow: 0 0 0 2px #000;
}
.tabstrip {
  flex: none;
  display: flex;
  align-items: flex-end;
  height: 76px;
  box-sizing: border-box;
  background: #0b0b15;
  border-top: 2px solid #55585c;
  border-left: 1px solid #44474d;
  border-radius: 20px 20px 0 0;
}
.lights {
  display: flex;
  flex: none;
  gap: 16px;
  width: 137.500px;
  padding: 25px 0 0 41px;
  align-self: flex-start;
}
.lights i {
  width: 24px;
  height: 24px;
  border-radius: 50%;
}
.red { background: #ed6a5e; }
.yellow { background: #f5be50; }
.green { background: #62c655; }
.tab {
  flex: none;
  display: flex;
  align-items: center;
  width: 190px;
  height: 46px;
  box-sizing: border-box;
  padding: 0 2px 14px 14px;
  border-right: 2px solid #33343a;
  font-size: 24px;
  line-height: 32px;
  letter-spacing: -0.200px;
  white-space: nowrap;
  color: #b5b5b8;
}
.tab-title {
  flex: 1;
  min-width: 0;
  margin-left: 16px;
  mask-image: linear-gradient(90deg, #000 68px, transparent 123px);
}
.tab.before-active {
  border-color: transparent;
}
.tab.active {
  width: 192px;
  height: 60px;
  margin-left: -1.500px;
  padding: 0 16px 0 16px;
  border: 0;
  border-radius: 12px 12px 0 0;
  background: #303341;
  color: #fff;
  font-weight: 500;
}
.tab.active .tab-title {
  margin-right: 14px;
  mask-image: linear-gradient(90deg, #000 46px, transparent 82px);
}
.plus {
  margin: 0 0 18px 26px;
}
.tab-search {
  margin: 0 0 16px 122px;
}

.toolbar {
  flex: none;
  display: flex;
  align-items: center;
  height: 72px;
  background: #303341;
}
.back { margin-left: 35px; }
.forward { margin-left: 44px; }
.reload { margin-left: 40px; }
.save { margin-left: 289px; }
.urlbar {
  flex: none;
  display: flex;
  align-items: center;
  width: 1746px;
  height: 56px;
  margin-left: 34px;
  box-sizing: border-box;
  padding-left: 24px;
  border-radius: 8px;
  background: #1b1c20;
  font-size: 26px;
  white-space: nowrap;
}
.insecure {
  margin-left: 19px;
  color: #9c9da1;
}
.url-sep {
  flex: none;
  width: 2px;
  height: 32px;
  margin: 0 18px 0 15px;
  background: #74757a;
}
.url-sep.light {
  margin: 0 22px 0 0;
  background: #b9b9bb;
}
.url {
  flex: none;
  display: flex;
  width: 1351px;
  color: #fff;
}
.path {
  color: #87888c;
}
.bat {
  margin-left: 34px;
}
.extensions {
  display: flex;
  gap: 32px;
  margin-left: 178px;
}
.update {
  display: flex;
  align-items: center;
  justify-content: space-between;
  flex: none;
  width: 166px;
  height: 56px;
  margin-left: 20px;
  box-sizing: border-box;
  padding: 0 17px 0 14px;
  border: 2px solid #e88b7f;
  border-radius: 8px;
  background: #332c33;
  color: #e88b7f;
  font: 25.500px Inter, sans-serif;
}

.bookmarks {
  flex: none;
  display: flex;
  align-items: center;
  height: 66px;
  box-sizing: border-box;
  padding: 0 0 10px 28px;
  border-bottom: 1px solid #22242c;
  background: #303341;
  color: #fff;
  font-size: 24px;
  white-space: nowrap;
}
.bookmark {
  flex: none;
  display: flex;
  align-items: center;
  gap: 16px;
}
.more {
  margin-left: 277px;
}

.page {
  flex: none;
  display: flex;
  flex-direction: column;
  height: 1374px;
  box-sizing: border-box;
  padding: 147px 240px 0;
  background: radial-gradient(1500px 60px at 50% 100%, #f8f8f8 0, #f9f9f9 50%, #fff 100%) no-repeat #fff;
  color: #474747;
  font-family: 'Noto Sans CJK SC', 'Noto Sans', sans-serif;
  font-size: 33px;
  line-height: 50px;
  white-space: nowrap;
}
h1 {
  margin: 0 0 100px;
  text-align: center;
  font-size: 59px;
  line-height: 60px;
  font-weight: 700;
}
label {
  margin-bottom: 27px;
  font-weight: 700;
}
label.second {
  margin: 45px 0 27px;
}
.input,
.textarea {
  box-sizing: border-box;
  border: 2px solid #dfdfdf;
  border-radius: 9px;
  padding: 0 28px;
  color: #3c3c3c;
  font-weight: 300;
}
.input {
  height: 106px;
  padding-top: 25px;
}
.textarea {
  position: relative;
  display: flex;
  align-items: flex-start;
  height: 508px;
  padding-top: 29px;
  border-color: #62bbee;
}
.caret {
  width: 2px;
  height: 46px;
  margin-top: 3px;
  background: #222;
}
.grip {
  position: absolute;
  right: 2px;
  bottom: 1px;
}
.send {
  position: relative;
  align-self: center;
  width: 374px;
  height: 102px;
  margin: 40px 0 0 2px;
  padding: 0 2px 2px 0;
  border: 0;
  border-radius: 9px;
  overflow: hidden;
  background: linear-gradient(#70c5f6, #5ca4cf);
  color: #fff;
  font: 700 33px/50px 'Noto Sans CJK SC', 'Noto Sans', sans-serif;
}
.send span {
  position: relative;
}
.grain {
  position: absolute;
  left: 0;
  top: 0;
  opacity: 0.08;
}
.site-footer {
  position: relative;
  flex: 1;
  background: linear-gradient(90deg, rgba(255, 255, 255, 0.8) 0, rgba(255, 255, 255, 0) 180px, rgba(255, 255, 255, 0) 2700px, rgba(255, 255, 255, 0.8) 2880px), linear-gradient(#ebebeb, #dfdfdf);
}

.dock {
  flex: none;
  display: flex;
  position: relative;
  width: 2739px;
  height: 106px;
  margin: 16px 0 0 71px;
  box-sizing: border-box;
  padding-left: 3px;
  border: 2px solid rgba(130, 165, 180, 0.35);
  border-radius: 32px;
  background: linear-gradient(90deg, #13293a 0, #13202c 330px, #11141b 650px, #121c26 850px, #15303c 980px, #1a4a5a 1130px, #1c5262 1220px, #41646c 1310px, #3a5058 1360px, #182830 1450px, #13232d 1560px, #1a4254 1680px, #1c4c66 1850px, #1b475e 2050px, #173b4e 2400px, #152f3f 2739px);
  background-clip: padding-box;
}
.app {
  position: relative;
  flex: none;
  width: 88.200px;
  display: flex;
  flex-direction: column;
  align-items: center;
  padding-top: 14px;
}
.dot {
  width: 8px;
  height: 8px;
  margin-top: 10px;
  border-radius: 50%;
  background: #93a5ae;
}
.bright .dot {
  background: #97c3da;
}
.badge {
  position: absolute;
  top: 6px;
  left: 56px;
  width: 32px;
  height: 32px;
  border-radius: 50%;
  background: #df4c42;
  color: #fff;
  font-size: 19px;
  line-height: 32px;
  text-align: center;
}
.dock-sep {
  flex: none;
  width: 2px;
  height: 78px;
  margin: 12px 18px 0 21px;
  background: #5a8399;
}
.dock-sep.second {
  margin: 12px 32px 0 20px;
}
.trash {
  margin-top: 11px;
}
</style>
